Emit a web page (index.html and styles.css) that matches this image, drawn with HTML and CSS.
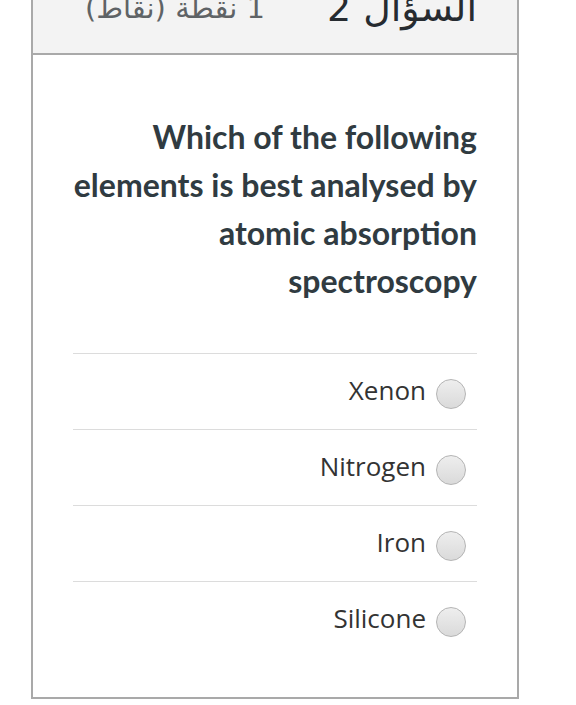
FILE: index.html
```html
<!DOCTYPE html>
<html lang="ar">

<head>
    <meta charset="UTF-8">
    <meta name="viewport" content="width=device-width, initial-scale=1.0">
    <title>السؤال 2</title>
    <link rel="stylesheet" href="styles.css">
</head>

<body>
    <div class="que">
        <div class="info" dir="rtl">
            <h3 class="no">السؤال 2</h3>
            <div class="grade">1 نقطة (نقاط)</div>
        </div>
        <div class="content">
            <div class="qtext" dir="ltr">Which of the following elements is best analysed by atomic absorption spectroscopy</div>
            <div class="answer">
                <label class="opt"><span class="txt">Xenon</span><input type="radio" name="q2"></label>
                <label class="opt"><span class="txt">Nitrogen</span><input type="radio" name="q2"></label>
                <label class="opt"><span class="txt">Iron</span><input type="radio" name="q2"></label>
                <label class="opt"><span class="txt">Silicone</span><input type="radio" name="q2"></label>
            </div>
        </div>
    </div>
</body>

</html>
```

FILE: styles.css
```css
body {
    margin: 0;
    padding: 0;
    background: #ffffff;
    font-family: "Open Sans", "DejaVu Sans", sans-serif;
}

.que {
    width: 488px;
    box-sizing: border-box;
    margin: -40px 0 0 31px;
    border: 2px solid #a9a9a9;
}

.info {
    display: flex;
    align-items: flex-end;
    gap: 62px;
    height: 93px;
    box-sizing: border-box;
    padding: 0 40px 24px;
    background: #f3f3f3;
    border-bottom: 2px solid #a9a9a9;
    font-family: "DejaVu Sans", sans-serif;
}

.info .no {
    margin: 0;
    font-size: 38px;
    font-weight: normal;
    line-height: 42px;
    color: #262b30;
}

.info .grade {
    font-size: 29px;
    line-height: 42px;
    color: #5f6366;
}

.content {
    padding: 58px 40px 40px;
}

.qtext {
    text-align: right;
    font-family: Lato, sans-serif;
    font-weight: bold;
    font-size: 32px;
    line-height: 48px;
    color: #303b41;
    margin-bottom: 48px;
}

.opt {
    display: flex;
    justify-content: flex-end;
    align-items: center;
    gap: 10px;
    height: 76px;
    box-sizing: border-box;
    padding: 4px 11px 0 0;
    border-top: 1px solid #dcdcdc;
    cursor: pointer;
}

.opt .txt {
    font-size: 26px;
    color: #333333;
    margin-top: -8px;
}

.opt input {
    appearance: none;
    margin: 0;
    width: 30px;
    height: 30px;
    border-radius: 50%;
    border: 1px solid #b4b4b4;
    background: linear-gradient(#eeeeee, #dadada);
}
```
